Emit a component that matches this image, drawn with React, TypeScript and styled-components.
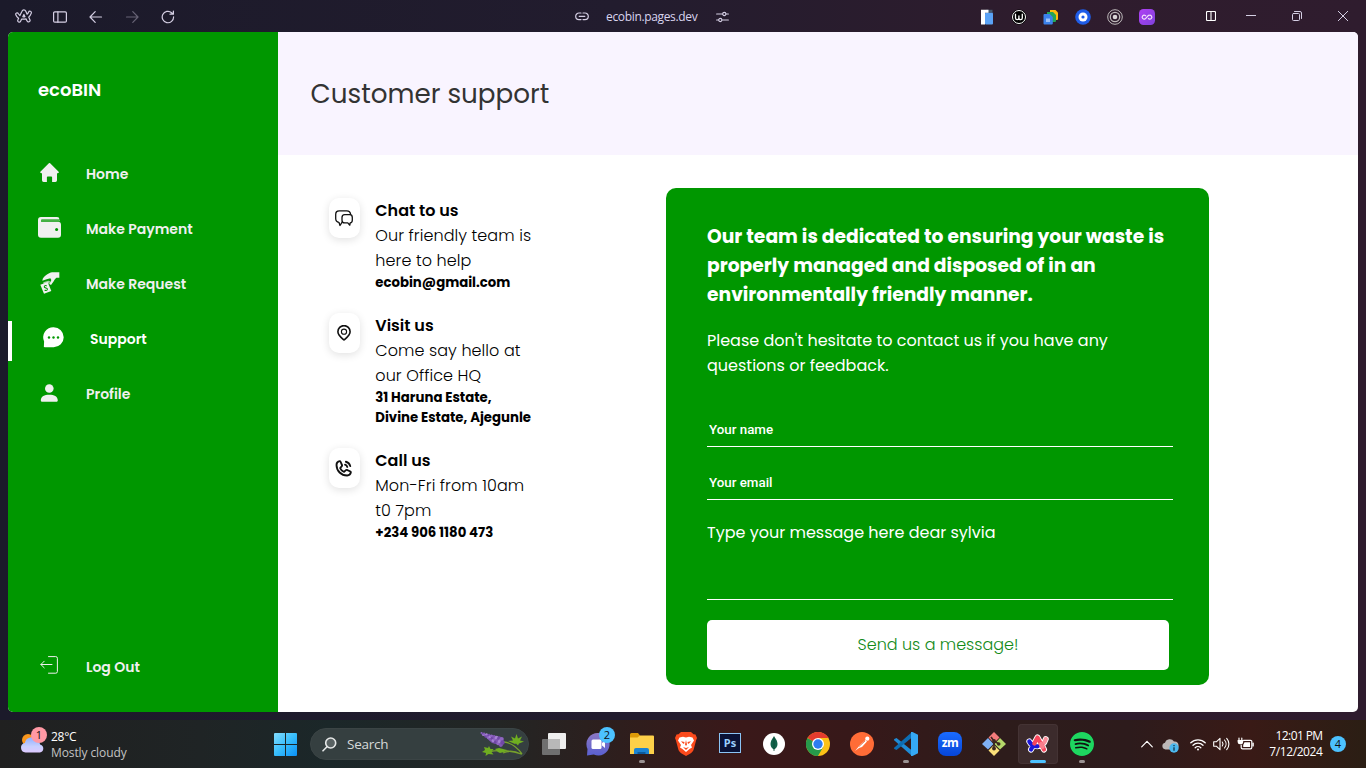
import React from "react";
import styled, { createGlobalStyle, css } from "styled-components";
import { PiPhoneCallBold } from "react-icons/pi";
import { SiSpotify } from "react-icons/si";

const GREEN = "#009700";

const GlobalStyle = createGlobalStyle`
  *, *::before, *::after { box-sizing: border-box; }
  body { margin: 0; overflow: hidden; }
  button, input, textarea { margin: 0; }
  svg { display: block; flex: none; }
`;

const spaced = css<{ $ls?: number }>`
  letter-spacing: ${({ $ls = 0 }) => $ls}px;
  white-space: nowrap;
`;

/* ---------- desktop and browser frame ---------- */

const Desktop = styled.div`
  width: 1366px;
  height: 768px;
  display: flex;
  flex-direction: column;
  background: linear-gradient(90deg, #1b1a2a 0%, #221c2e 45%, #2e1c2d 75%, #2f1c2e 100%);
  font-family: "Open Sans", "Noto Sans", sans-serif;
`;

const TitleBar = styled.header`
  height: 32px;
  flex: none;
  display: grid;
  grid-template-columns: 575px 1fr 387px;
  align-items: center;
  padding-top: 1px;
  color: #d5cfe4;
`;

const BrowserControls = styled.div`
  display: grid;
  grid-template-columns: repeat(5, 36px);
  justify-items: center;
  align-items: center;
  padding-left: 6px;
`;

const AddressBar = styled.div`
  display: flex;
  align-items: center;
  font-size: 12px;
  line-height: 16px;
`;

const Address = styled.span`
  ${spaced}
  width: 92px;
  margin: 0 18px 0 17px;
  color: #d9d4ee;
`;

const Extensions = styled.div`
  display: flex;
  align-items: center;
  gap: 16px;
`;

const WindowControls = styled.div`
  display: flex;
  align-items: center;
  gap: 36px;
  margin-left: 35px;
  padding-bottom: 1px;
`;

const SplitButton = styled.span`
  margin-right: -6px;
`;

const Page = styled.div`
  height: 680px;
  flex: none;
  margin: 0 8px 8px;
  display: flex;
  border-radius: 5px;
  overflow: hidden;
  background: #fff;
  font-family: Poppins, Inter, sans-serif;
`;

/* ---------- sidebar ---------- */

const Sidebar = styled.aside`
  width: 270px;
  flex: none;
  display: flex;
  flex-direction: column;
  background: ${GREEN};
  color: #f0f0f0;
`;

const Brand = styled.div`
  height: 27px;
  margin: 44px 0 53px 30px;
  font-size: 18px;
  font-weight: 600;
  line-height: 27px;
  color: #fff;
`;

const Nav = styled.nav`
  flex: 1;
  display: flex;
  flex-direction: column;
  gap: 15px;
`;

const NavItem = styled.a<{ $active?: boolean }>`
  height: 40px;
  display: flex;
  align-items: center;
  gap: 25px;
  padding: 0 0 4px 30px;
  font-size: 14px;
  font-weight: 600;
  white-space: nowrap;
  ${({ $active }) =>
    $active &&
    css`
      border-left: 4px solid #fff;
      color: #fff;
    `}
`;

const NavIcon = styled.span`
  width: 23px;
  display: flex;
  justify-content: center;
  padding-bottom: 3px;
`;

const LogOut = styled(NavItem)`
  margin-bottom: 23px;
  ${NavIcon} { padding-bottom: 5px; }
`;

/* ---------- main area ---------- */

const Main = styled.main`
  flex: 1;
  display: flex;
  flex-direction: column;
`;

const PageHeader = styled.div`
  height: 123px;
  flex: none;
  display: flex;
  align-items: center;
  padding-left: 32.5px;
  background: #f9f4ff;
`;

const Title = styled.h1`
  margin: 0;
  font-size: 26.2px;
  font-weight: 400;
  line-height: 40px;
  color: #333;
`;

const Content = styled.div`
  display: flex;
  align-items: flex-start;
  padding: 33px 0 0 51px;
`;

const Contacts = styled.div`
  width: 337px;
  display: flex;
  flex-direction: column;
  gap: 20px;
  padding-top: 10px;
`;

const Contact = styled.section`
  display: flex;
  align-items: flex-start;
  gap: 15px;
`;

const Tile = styled.div`
  width: 31px;
  height: 40px;
  display: flex;
  align-items: center;
  justify-content: center;
  padding-right: 1px;
  border-radius: 10px;
  background: #fff;
  box-shadow: 0 2px 8px rgba(0, 0, 0, 0.12);
`;

const ContactText = styled.div`
  display: flex;
  flex-direction: column;
  padding-left: 0.3px;
  color: #000;
  white-space: nowrap;
`;

const ContactTitle = styled.strong`
  font-size: 16px;
  font-weight: 600;
  line-height: 25px;
`;

const ContactLine = styled.span`
  font-size: 16px;
  font-weight: 300;
  line-height: 25px;
  letter-spacing: 0.08px;
`;

const ContactDetail = styled.span`
  font-size: 13.28px;
  font-weight: 700;
  line-height: 20px;
`;

/* ---------- message form ---------- */

const FormCard = styled.form`
  width: 543px;
  height: 497px;
  display: flex;
  flex-direction: column;
  padding: 34px 36px 15px 41px;
  border-radius: 10px;
  background: ${GREEN};
  color: #fff;
`;

const Lead = styled.h2`
  margin: 0 0 19px;
  font-size: 18.72px;
  font-weight: 700;
  line-height: 29px;
`;

const Intro = styled.p`
  width: 430px;
  margin: 0 0 34px;
  font-size: 16px;
  font-weight: 400;
  line-height: 25px;
`;

const Field = styled.input`
  width: 466px;
  height: 35px;
  margin-bottom: 18px;
  padding: 1px 2px;
  border: 0;
  border-bottom: 1px solid #fff;
  outline: 0;
  background: transparent;
  color: #fff;
  font: 500 13.33px Roboto, sans-serif;
  &::placeholder { color: #fff; opacity: 1; }
`;

const Message = styled.textarea`
  width: 466px;
  height: 80px;
  margin: 2px 0 20px;
  padding: 0;
  border: 0;
  border-bottom: 1px solid #fff;
  outline: 0;
  resize: none;
  background: transparent;
  color: #fff;
  font: 400 16px/25px Poppins, Inter, sans-serif;
  &::placeholder { color: #fff; opacity: 1; }
`;

const SendButton = styled.button`
  width: 462px;
  height: 50px;
  padding: 0 0 2px;
  border: 0;
  border-radius: 5px;
  background: #fff;
  color: #128a18;
  font: 300 16px/25px Poppins, Inter, sans-serif;
`;

/* ---------- taskbar ---------- */

const Taskbar = styled.footer`
  height: 48px;
  flex: none;
  display: flex;
  align-items: center;
  background: linear-gradient(
    90deg,
    #202020 0,
    #1f2425 200px,
    #1b2729 330px,
    #232524 500px,
    #2e1e1d 620px,
    #3a1819 740px,
    #371819 850px,
    #2d1c1b 1000px,
    #2d1b1c 1130px,
    #391a16 1250px,
    #2b1e14 1366px
  );
  color: #fff;
`;

const Weather = styled.div`
  width: 274px;
  display: flex;
  align-items: center;
  gap: 4px;
  padding-left: 20px;
`;

const WeatherText = styled.div`
  display: flex;
  flex-direction: column;
  padding-top: 2px;
  font-size: 12px;
  line-height: 16px;
`;

const SmallText = styled.span<{ $ls?: number; $muted?: boolean }>`
  ${spaced}
  color: ${({ $muted }) => ($muted ? "#c3c3c3" : "#fff")};
`;

const SearchBox = styled.div`
  width: 219px;
  height: 32px;
  display: flex;
  align-items: center;
  margin: 0 3px 0 13px;
  padding: 0 3px 0 11px;
  border-radius: 16px;
  background: #353f40;
  border: 1px solid #3b4445;
`;

const SearchLabel = styled.span<{ $ls?: number }>`
  ${spaced}
  flex: 1;
  margin-left: 10px;
  font-size: 13.5px;
  color: #d5d9d9;
`;

const Apps = styled.div`
  display: flex;
`;

const AppSlot = styled.div<{ $active?: boolean; $running?: boolean }>`
  position: relative;
  width: 40px;
  height: 40px;
  margin: 0 2px;
  display: flex;
  align-items: center;
  justify-content: center;
  border-radius: 4px;
  ${({ $active }) =>
    $active && "background: #3c2b2c; box-shadow: inset 0 0 0 1px #443334;"}
  ${({ $active, $running }) =>
    ($active || $running) &&
    css`
      &::after {
        content: "";
        position: absolute;
        bottom: 1px;
        width: ${$active ? 16 : 6}px;
        height: 3px;
        border-radius: 2px;
        background: ${$active ? "#4cc2ff" : "#9a9292"};
      }
    `}
`;

const Count = styled.span<{ $pink?: boolean }>`
  position: absolute;
  top: ${({ $pink }) => ($pink ? "-4px" : "3px")};
  right: ${({ $pink }) => ($pink ? "0" : "3px")};
  width: 16px;
  height: 16px;
  border-radius: 50%;
  background: ${({ $pink }) => ($pink ? "#ff99a4" : "#4cc2ff")};
  color: #111;
  font-size: 11px;
  line-height: 16px;
  text-align: center;
`;

const WeatherIcon = styled.span`
  position: relative;
  width: 27px;
`;

const PsTile = styled.span`
  width: 22px;
  height: 20px;
  margin-bottom: 3px;
  border: 1px solid #8bc4f5;
  background: #0a1236;
  color: #9bd0ff;
  font-size: 11px;
  font-weight: 700;
  line-height: 17px;
  text-align: center;
`;

const ZoomTile = styled.span`
  width: 24px;
  height: 24px;
  border-radius: 8px;
  background: linear-gradient(#1a6cff, #0645d8);
  color: #fff;
  font: 700 12px/21px "Open Sans", sans-serif;
  letter-spacing: -0.5px;
  text-align: center;
`;

const SpotifyMark = styled.span`
  width: 24px;
  height: 24px;
  border-radius: 50%;
  background: #111;
  color: #1ed760;
`;

const Tray = styled.div`
  flex: 1;
  display: flex;
  align-items: center;
  justify-content: flex-end;
  padding-right: 20px;
`;

const TrayIcons = styled.div`
  display: flex;
  align-items: center;
  gap: 7px;
  margin-right: 13.5px;
`;

const CloudStatus = styled.span`
  margin: 2px 4px 0 2.5px;
`;

const Clock = styled.div`
  width: 55px;
  display: flex;
  flex-direction: column;
  align-items: flex-end;
  margin-right: 7.5px;
  font-size: 12px;
  line-height: 16px;
`;

const NotificationCount = styled.span`
  width: 16px;
  height: 16px;
  border-radius: 50%;
  background: #4cc2ff;
  color: #111;
  font-size: 11px;
  line-height: 16px;
  text-align: center;
`;

/* ---------- drawings ---------- */

const stroke = {
  fill: "none",
  stroke: "currentColor",
  strokeLinecap: "round" as const,
  strokeLinejoin: "round" as const,
};

const HomeIcon = () => (
  <svg width="19" height="20" viewBox="0 0 19 20" fill="currentColor">
    <path d="M8.600.4a1.300 1.300 0 0 1 1.800 0l8 8c.9.9.4 1.900-.7 1.900H17v7a1.600 1.600 0 0 1-1.600 1.600h-3.300v-4.600a.9.9 0 0 0-.9-.9H7.800a.9.9 0 0 0-.9.9v4.600H3.600A1.600 1.600 0 0 1 2 17.300v-7h-.7c-1.100 0-1.600-1-.7-1.900Z" />
  </svg>
);

const WalletIcon = () => (
  <svg width="23" height="21" viewBox="0 0 23 21" fill="currentColor">
    <path d="M3 0H19a2.400 2.400 0 0 1 2.400 2.600H3.500v.5H21.500V4H3.500A2 2 0 0 0 3 4.700H20a3 3 0 0 1 3 3V17.800a3 3 0 0 1-3 3H3a3 3 0 0 1-3-3V3a3 3 0 0 1 3-3Z" />
    <path d="M3 2.800H21.500V4.700H3Z" fill="#45b245" />
    <circle cx="18.600" cy="12.500" r="1.500" fill={GREEN} />
  </svg>
);

/* A hand reaching in from the right, holding out a tilted banknote. */
const RequestIcon = () => (
  <svg width="20" height="22" viewBox="0 0 60 66" fill="currentColor">
    <path d="M58 1v16H49c-4 3-7 9-10 14l-6 8-5-3 6-12-3-5-11 3-13 4c0-8 8-15 15-19 8-5 13-6 19-6Z" />
    <path d="m10 31 15-5 5 2-2 9-5-5-12 4Z" opacity=".7" />
    <path d="m1 38 22-8 11 27-22 8Z" />
    <path d="M20 42c-3-3-8-1-7 3s8 2 9 6-4 6-8 3" fill="none" stroke={GREEN} strokeWidth="3.200" />
  </svg>
);

const SupportIcon = () => (
  <svg width="21" height="21" viewBox="0 0 21 21">
    <path d="M10.700.3a10 10 0 1 1 0 20H1.800c-.8 0-1.200-.6-.9-1.300l.2-4.500A10 10 0 0 1 10.700.3Z" fill="currentColor" />
    <g fill={GREEN}>
      <circle cx="6" cy="10.500" r="1.200" />
      <circle cx="10.500" cy="10.500" r="1.200" />
      <circle cx="15" cy="10.500" r="1.200" />
    </g>
  </svg>
);

const ProfileIcon = () => (
  <svg width="19" height="18" viewBox="0 0 19 18" fill="currentColor">
    <circle cx="9.300" cy="4.500" r="4.300" />
    <path d="M.8 16.200C1.100 12.400 4.300 10.700 9.300 10.700s8.200 1.700 8.500 5.500c0 .9-.5 1.500-1.300 1.500H2.100c-.8 0-1.300-.6-1.300-1.500Z" />
  </svg>
);

const LogOutIcon = () => (
  <svg width="19" height="18" viewBox="0 0 19 18" {...stroke}>
    <path d="M8.500.6h7.200a1.700 1.700 0 0 1 1.700 1.700v13.200a1.700 1.700 0 0 1-1.700 1.700H8.500M12 8.500H.9M4.200 5.200.9 8.500l3.300 3.300" />
  </svg>
);

const ChatIcon = () => (
  <svg width="18" height="17" viewBox="0 0 18 17" {...stroke} stroke="#111" strokeWidth="1.300">
    <path d="M7 12.300 5 15.500 3.900 12.300C1.600 12 .7 11 .7 8.500V4.500C.7 1.700 1.600.8 4.300.8h7.500c2.600 0 3.500.7 3.800 3.500" />
    <path d="M9.700 4.700h5c1.900 0 2.600.8 2.600 2.700v2.800c0 1.800-.6 2.500-2.100 2.600l-.4 2.400-2-2.300H9.700c-2 0-2.700-.8-2.700-2.700V7.400c0-1.900.8-2.700 2.700-2.700Z" />
  </svg>
);

const PinIcon = () => (
  <svg width="14" height="16" viewBox="0 0 14 16" {...stroke} stroke="#111">
    <path strokeWidth="1.600" d="M7 15C4.800 13 .9 10.300.9 6.700a6.100 6.100 0 0 1 12.200 0C13.100 10.300 9.200 13 7 15Z" />
    <circle cx="7" cy="6.700" r="2.600" strokeWidth="1.100" />
  </svg>
);

const ArcOutline = () => (
  <svg width="18" height="15" viewBox="0 0 18 15" {...stroke} strokeWidth="1.200">
    <path d="M7 2.300C7.700.5 10 .5 10.800 2.300l1.300 2.900c.8-.6 1.200-1.400 1.500-2.200.7-1.700 3.200-.7 2.700 1.100-.5 1.500-1.400 2.900-2.600 4l1.200 2.600c.8 1.900-1.800 3.200-2.800 1.300L11 9.900c-1.500.4-3 .4-4.300.1L5.600 12.200c-.9 1.800-3.500.7-2.700-1.300l.7-1.700C2.400 8.300 1.500 7.200.9 5.900.1 4.200 2.500 3 3.400 4.700c.4.7.9 1.300 1.500 1.800L7 2.300Z" />
    <path d="M8.900 5.500 7.800 7.700c.7.2 1.500.2 2.200 0L8.900 5.500Z" />
  </svg>
);

const SidebarGlyph = () => (
  <svg width="14" height="12" viewBox="0 0 14 12" {...stroke} strokeWidth="1.200">
    <rect x=".6" y=".8" width="12.800" height="10.400" rx="1.200" />
    <path d="M4.900.8v10.400" />
  </svg>
);

const Arrow = ({ forward }: { forward?: boolean }) => (
  <svg width="14" height="14" viewBox="0 0 14 14" {...stroke} strokeWidth="1.200" opacity={forward ? 0.4 : 1}>
    <path d={forward ? "M1.500 7h11.500M7.800 1.600 13 7l-5.200 5.400" : "M12.500 7H1M6.200 1.600 1 7l5.200 5.400"} />
  </svg>
);

const ReloadGlyph = () => (
  <svg width="14" height="14" viewBox="0 0 14 14" {...stroke} strokeWidth="1.200">
    <path d="M12.600 6.800A5.700 5.700 0 1 1 10.600 2.700L12 4M12.400 1v3.200H9" />
  </svg>
);

const LinkGlyph = () => (
  <svg width="14" height="9" viewBox="0 0 14 9" {...stroke} strokeWidth="1.200">
    <path d="M6 1H4a3.300 3.300 0 0 0 0 6.600h2M8 1h2a3.300 3.300 0 0 1 0 6.600H8M4.200 4.300h5.600" />
  </svg>
);

const TuneGlyph = () => (
  <svg width="13" height="12" viewBox="0 0 13 12" {...stroke} strokeWidth="1.100">
    <path d="M.6 3h6M10 3h2.400M.6 9h2M6 9h6.400" />
    <circle cx="8.300" cy="3" r="1.600" />
    <circle cx="4.300" cy="9" r="1.600" />
  </svg>
);

const PagesExtension = () => (
  <svg width="16" height="16" viewBox="0 0 16 16">
    <rect x="6" y="3.500" width="8" height="12" rx="1" fill="#5aa2f6" />
    <path d="M7 .8h6.500v2.700H7Z" fill="#465a70" />
    <path d="M2 .8h7.500v3H6V15.500H2Z" fill="#fff" />
  </svg>
);

const WExtension = () => (
  <svg width="16" height="16" viewBox="0 0 16 16" fill="none">
    <circle cx="8" cy="8" r="7.500" fill="#000" />
    <circle cx="8" cy="8" r="6.500" stroke="#fff" />
    <path d="M4.500 4.800V9a1.700 1.700 0 0 0 3.400 0V6.500V9a1.700 1.700 0 0 0 3.400 0V4.800" stroke="#fff" strokeWidth="1.300" />
  </svg>
);

const DocsExtension = () => (
  <svg width="16" height="16" viewBox="0 0 16 16">
    <path d="M7 1h5.500L15 3.500V10a1 1 0 0 1-1 1H7Z" fill="#fbb90d" />
    <path d="M4 3h6l3 3v6a1 1 0 0 1-1 1H4Z" fill="#23a455" />
    <path d="M1.500 5h5.300l3 3v6.500a1 1 0 0 1-1 1H1.500a1 1 0 0 1-1-1V6a1 1 0 0 1 1-1Z" fill="#3b82ec" />
    <path d="M3 9.500h4v3.500H3Z" fill="#9cc2fb" />
  </svg>
);

const RingExtension = () => (
  <svg width="16" height="16" viewBox="0 0 16 16">
    <circle cx="8" cy="8" r="7.800" fill="#1f5de8" />
    <circle cx="8" cy="8" r="4.500" fill="#fff" />
    <circle cx="8" cy="8" r="1.600" fill="#1f5de8" />
  </svg>
);

const TargetExtension = () => (
  <svg width="16" height="16" viewBox="0 0 16 16" fill="none" stroke="#bdb8ba">
    <circle cx="8" cy="8" r="7.300" />
    <circle cx="8" cy="8" r="4.700" strokeWidth="1.300" />
    <circle cx="8" cy="8" r="2.300" fill="#d8d4d6" stroke="none" />
  </svg>
);

const InfinityExtension = () => (
  <svg width="16" height="16" viewBox="0 0 16 16" fill="none">
    <defs>
      <linearGradient id="violet" x1="0" y1="0" x2="1" y2="1">
        <stop offset="0" stopColor="#b040f4" />
        <stop offset="1" stopColor="#7f42dc" />
      </linearGradient>
    </defs>
    <rect width="16" height="16" rx="4.500" fill="url(#violet)" />
    <path d="M9.800 6 6.300 9.800a2 2 0 1 1 0-3.300l.7.700M9 9.300l.7.500a2 2 0 1 0 0-3.300" stroke="#f3defc" strokeWidth="1.200" />
  </svg>
);

const SplitGlyph = () => (
  <svg width="10" height="10" viewBox="0 0 10 10" fill="none" stroke="#fff" strokeWidth="1.100">
    <rect x=".5" y=".5" width="9" height="9" rx="1" />
    <path d="M5 .5v9" />
  </svg>
);

const MinimizeGlyph = () => (
  <svg width="10" height="10" viewBox="0 0 10 10" stroke="currentColor">
    <path d="M0 4.500h10" />
  </svg>
);

const RestoreGlyph = () => (
  <svg width="10" height="10" viewBox="0 0 10 10" {...stroke}>
    <rect x=".5" y="2.500" width="7" height="7" rx="1" />
    <path d="M2.500.5H8A1.500 1.500 0 0 1 9.500 2v5.500" />
  </svg>
);

const CloseGlyph = () => (
  <svg width="10" height="10" viewBox="0 0 10 10" {...stroke}>
    <path d="m.3.300 9.400 9.400M9.700.3.300 9.700" />
  </svg>
);

const CloudDrawing = () => (
  <svg width="27" height="26" viewBox="0 0 27 26">
    <defs>
      <linearGradient id="cloud" x1="0" y1="0" x2="0" y2="1">
        <stop offset="0" stopColor="#8fb0ff" />
        <stop offset="0.600" stopColor="#c8d0ff" />
        <stop offset="1" stopColor="#ddc9ff" />
      </linearGradient>
    </defs>
    <circle cx="8" cy="9" r="6" fill="#f8971d" />
    <path d="M5.500 21.500a4.800 4.800 0 0 1-.6-9.500A6.500 6.500 0 0 1 17 9.700a5.600 5.600 0 0 1 3.400 4 4 4 0 0 1-.5 7.800Z" fill="url(#cloud)" />
  </svg>
);

const WindowsLogo = () => (
  <svg width="23" height="23" viewBox="0 0 23 23">
    <defs>
      <linearGradient id="win" x1="0" y1="0" x2="1" y2="1">
        <stop offset="0" stopColor="#83dcfd" />
        <stop offset="0.500" stopColor="#37bdfb" />
        <stop offset="1" stopColor="#0a90f6" />
      </linearGradient>
    </defs>
    <path d="M1 0h10v11H0V1a1 1 0 0 1 1-1ZM12 0h10a1 1 0 0 1 1 1v10H12ZM0 12h11v11H1a1 1 0 0 1-1-1ZM12 12h11v10a1 1 0 0 1-1 1H12Z" fill="url(#win)" />
  </svg>
);

const SearchGlyph = () => (
  <svg width="15" height="15" viewBox="0 0 15 15" fill="none" stroke="#e6e8e8" strokeWidth="1.600" strokeLinecap="round">
    <circle cx="8.700" cy="6" r="5" fill="#596263" />
    <path d="m5 9.800-4 4" />
  </svg>
);

const LAVENDER = Array.from({ length: 26 }, (_, i) => {
  const t = i / 25;
  const side = (i % 3) - 1;
  return { x: 2.5 + t * 21, y: 2.5 + t * 9 + side * (0.6 + t * 2.6), r: 1 + t * 1.2 };
});

const LavenderDrawing = () => (
  <svg width="46" height="26" viewBox="0 0 46 26">
    <path d="M25 11c8 1 13 5 18 12M9 21c12-3 22-1 34 2M24 22c6-3 12-2 18 1" fill="none" stroke="#77a12c" strokeWidth="1.300" />
    <path d="m2 2 18 4 5 4-2 4.500L13 12Z" fill="#7c55ad" />
    {LAVENDER.map((p, i) => (
      <circle key={i} cx={p.x} cy={p.y} r={p.r} fill={["#8f66c2", "#7048a6", "#a582d2", "#8257b6"][i % 4]} />
    ))}
    <path d="m36 13-7-3 5-.5-2-4 4 2L37.500 3 39 7.500l4-2-2 4 4 1-5 2-1 2-2-2ZM7 22l-4-1 3-2-1-3 4 1 1-2 1.500 3 3 0-2 3 2 2.500-5-.5-3 2ZM19 21l-3-3 4-1 4 1 4 1-3 2-4 1Z" fill="#6fae20" />
  </svg>
);

const TaskViewIcon = () => (
  <svg width="24" height="24" viewBox="0 0 24 24">
    <rect x="6" y="1" width="18" height="16" rx="1" fill="#eee" />
    <rect x="0" y="7" width="18" height="16" rx="1" fill="#6f6f6f" />
    <path d="M6 7h12v10H6Z" fill="#b8b8b8" />
  </svg>
);

const MeetIcon = () => (
  <svg width="24" height="24" viewBox="0 0 24 24">
    <defs>
      <linearGradient id="meet" x1="0" y1="0" x2="0" y2="1">
        <stop offset="0" stopColor="#8c78c4" />
        <stop offset="1" stopColor="#5a60d0" />
      </linearGradient>
    </defs>
    <path d="M12 1a11.200 11.200 0 1 1-4.200 21.400L1 23.500 1.500 17A11.200 11.200 0 0 1 12 1Z" fill="url(#meet)" />
    <rect x="5.500" y="7.500" width="10" height="9.500" rx="1.500" fill="#fff" />
    <path d="m16 11 3-2.500v7.500L16 13.500Z" fill="#fff" />
  </svg>
);

const FolderIcon = () => (
  <svg width="24" height="22" viewBox="0 0 24 22">
    <path d="M0 1.500A1.500 1.500 0 0 1 1.500 0H8l2 2.500V6H0Z" fill="#dc9a08" />
    <path d="M0 4.500h7.500L10 2.500h13a1 1 0 0 1 1 1V21H0Z" fill="#fdd049" />
    <path d="M4 21v-4a2 2 0 0 1 2-2h11a2 2 0 0 1 2 2v4Z" fill="#1b84d4" />
    <path d="M7.500 21v-2h8v2Z" fill="#0c5b9d" />
  </svg>
);

const BraveDrawing = () => (
  <svg width="22" height="24" viewBox="0 0 22 24">
    <path d="M6 0h10l2.500 2.300 2 .2L22 6l-.8 2L18.500 18c-.5 1.500-2 2.700-3.500 3.800L11 24l-4-2.200C5.500 20.700 4 19.500 3.500 18L.8 8 0 6l1.500-3.500 2-.2Z" fill="#fb4a1c" />
    <path d="M4.500 5.500 8 4.700l3 .8 3-.8 3.500.8 1.500 3-3 4.500 1 2.500-2.500 1.500-3.500 3-3.500-3L5 15.500 6 13 3 8.500Z" fill="#fff" />
    <path d="m6 9.300 3.500.8-.5 2L7.500 11ZM16 9.300l-3.500.8.500 2 1.500-1.100ZM11 8l1 4.500-1 1.500-1-1.500ZM8 15l3 1 3-1-3 3Z" fill="#fb4a1c" />
  </svg>
);

const MongoDrawing = () => (
  <svg width="22" height="22" viewBox="0 0 22 22">
    <circle cx="11" cy="11" r="11" fill="#fff" />
    <path d="M11 3.500c2.300 2.700 3.500 5 3.500 7.500S13.300 15.200 11 16.500C8.700 15.200 7.500 13.500 7.500 11S8.700 6.200 11 3.500Z" fill="#116149" />
    <path d="M11 3.500V18" stroke="#0a4a36" strokeWidth=".8" />
  </svg>
);

const ChromeDrawing = () => (
  <svg width="24" height="24" viewBox="0 0 24 24">
    <circle cx="12" cy="12" r="12" fill="#fbc116" />
    <path d="M12 12 1.600 6A12 12 0 0 0 12 24l5.200-9Z" fill="#269a4b" />
    <path d="M12 12 1.600 6a12 12 0 0 1 20.800 0H12Z" fill="#e33b2e" />
    <circle cx="12" cy="12" r="6" fill="#fff" />
    <circle cx="12" cy="12" r="4.700" fill="#2d7df0" />
  </svg>
);

const PostmanDrawing = () => (
  <svg width="24" height="24" viewBox="0 0 24 24" fill="none">
    <circle cx="12" cy="12" r="12" fill="#ff6c37" />
    <path d="m5 19 5-6 5.500-5 1.500 1.500-5 5.500-3 1-4 3Z" fill="#fff" />
    <circle cx="17.300" cy="6.700" r="2.100" fill="#fff" />
    <path d="m9 14.500 6-5.500" stroke="#e9825f" />
  </svg>
);

const CodeDrawing = () => (
  <svg width="24" height="24" viewBox="0 0 24 24">
    <path d="M2.500 6 18 18.500V24L.4 8.500c-.5-.5-.5-1 0-1.400Z" fill="#1f8bd6" />
    <path d="M2.500 18 18 5.500V0L.4 15.500c-.5.500-.5 1 0 1.400Z" fill="#0d6db3" />
    <path d="M17 0h1.500L24 2.700v18.600L18.500 24H17Z" fill="#35a9f5" />
  </svg>
);

const GitDrawing = () => (
  <svg width="24" height="24" viewBox="0 0 24 24">
    <path d="m12 0 5.500 5.500L12 11 6.500 5.500Z" fill="#f37c7c" />
    <path d="m6 6 5.500 6L6 17.500 0 12Z" fill="#7fb0f5" />
    <path d="m18 6 6 6-6 5.500-5.500-5.500Z" fill="#b5d86a" />
    <path d="m12 13 5.500 5.500L12 24l-5.500-5.500Z" fill="#fbe07a" />
    <path d="m9 5 3 4v8M12 9l5 3" stroke="#3b2620" strokeWidth="1.600" fill="none" />
    <circle cx="12" cy="9" r="1.900" fill="#3b2620" />
    <circle cx="12" cy="16.500" r="1.900" fill="#3b2620" />
    <circle cx="16.700" cy="12" r="1.800" fill="#3b2620" />
  </svg>
);

/* Back to front: white outline, the two arms, then the peaked shape. */
const ArcDrawing = () => (
  <svg width="24" height="22" viewBox="0 0 24 22" fill="none" strokeLinecap="round" strokeLinejoin="round">
    <path d="M3.300 8.500C5 12 8 13.300 11.500 13.300c4 0 7-3 8.300-7.300M5 16.500l6.500-12 6.500 12M8 13h7" stroke="#fff" strokeWidth="6" />
    <path d="M12 13c4 0 6.800-3.500 7.800-7" stroke="#fb8f9b" strokeWidth="4.200" />
    <path d="M3.300 8.500C5 12 8 13.300 11.500 13.300M5 16.500l3-5.500" stroke="#1b16d8" strokeWidth="4.200" />
    <path d="m8.300 10.500 3.200-6L18 16.500" stroke="#f8465c" strokeWidth="4.200" />
    <path d="m15 11 1.500 2.800" stroke="#fb7f8d" strokeWidth="4.200" />
  </svg>
);

const ChevronGlyph = () => (
  <svg width="12" height="8" viewBox="0 0 12 8" {...stroke} strokeWidth="1.200">
    <path d="m.7 6.800 5.300-5.500 5.300 5.500" />
  </svg>
);

const OneDriveGlyph = () => (
  <svg width="17" height="15" viewBox="0 0 17 15">
    <path d="M3.500 11.500A3.400 3.400 0 0 1 3 4.800 5 5 0 0 1 12 3.500a4 4 0 0 1 1 8Z" fill="#bcb7b7" />
    <circle cx="12" cy="10" r="4.700" fill="#4cb8ee" />
    <path d="M12 9.300v3.500M12 7v1.200" stroke="#15384c" strokeWidth="1.300" />
  </svg>
);

const WifiGlyph = () => (
  <svg width="16" height="13" viewBox="0 0 16 13" {...stroke} strokeWidth="1.300">
    <path d="M.8 4.800a10.200 10.200 0 0 1 14.400 0M3 7.300a7 7 0 0 1 10 0M5.200 9.700a4 4 0 0 1 5.600 0" />
    <circle cx="8" cy="11.500" r="1" fill="currentColor" stroke="none" />
  </svg>
);

const VolumeGlyph = () => (
  <svg width="17" height="14" viewBox="0 0 17 14" {...stroke} strokeWidth="1.100">
    <path d="M.7 4.800h2.600L7 1.300v11.400L3.300 9.200H.7ZM9.300 5a3.300 3.300 0 0 1 0 4M11.500 3a6 6 0 0 1 0 8M13.700 1.300a8.500 8.500 0 0 1 0 11.400" />
  </svg>
);

const BatteryGlyph = () => (
  <svg width="17" height="14" viewBox="0 0 17 14" {...stroke} strokeWidth="1.200">
    <path d="M6.500 3.300h7a1.300 1.300 0 0 1 1.300 1.300v6a1.300 1.300 0 0 1-1.300 1.300H5.500A1.300 1.300 0 0 1 4.200 10.600V8M16.200 6v3" />
    <path d="M7.500 5.300h5.500v4.600H6.200V8Z" fill="currentColor" stroke="none" />
    <path d="M.6 3h5.600v2a2.300 2.300 0 0 1-2.300 2.300H3A2.400 2.400 0 0 1 .6 5Z" fill="currentColor" stroke="none" />
    <path d="M2 1v2M4.800 1v2" />
  </svg>
);

/* ---------- data ---------- */

const NAV: { label: string; icon: React.ReactNode; active?: boolean }[] = [
  { label: "Home", icon: <HomeIcon /> },
  { label: "Make Payment", icon: <WalletIcon /> },
  { label: "Make Request", icon: <RequestIcon /> },
  { label: "Support", icon: <SupportIcon />, active: true },
  { label: "Profile", icon: <ProfileIcon /> },
];

const CONTACTS: { icon: React.ReactNode; title: string; lines: string[]; details: string[] }[] = [
  {
    icon: <ChatIcon />,
    title: "Chat to us",
    lines: ["Our friendly team is", "here to help"],
    details: ["ecobin@gmail.com"],
  },
  {
    icon: <PinIcon />,
    title: "Visit us",
    lines: ["Come say hello at", "our Office HQ"],
    details: ["31 Haruna Estate,", "Divine Estate, Ajegunle"],
  },
  {
    icon: <PiPhoneCallBold size={20} color="#111" />,
    title: "Call us",
    lines: ["Mon-Fri from 10am", "t0 7pm"],
    details: ["+234 906 1180 473"],
  },
];

const APPS: { name: string; icon: React.ReactNode; active?: boolean; running?: boolean }[] = [
  { name: "tasks", icon: <TaskViewIcon /> },
  { name: "meet", icon: <><MeetIcon /><Count>2</Count></> },
  { name: "files", icon: <FolderIcon />, running: true },
  { name: "brave", icon: <BraveDrawing /> },
  { name: "photoshop", icon: <PsTile>Ps</PsTile> },
  { name: "mongodb", icon: <MongoDrawing /> },
  { name: "chrome", icon: <ChromeDrawing /> },
  { name: "postman", icon: <PostmanDrawing /> },
  { name: "code", icon: <CodeDrawing />, running: true },
  { name: "zoom", icon: <ZoomTile>zm</ZoomTile> },
  { name: "git", icon: <GitDrawing /> },
  { name: "arc", icon: <ArcDrawing />, active: true },
  { name: "spotify", icon: <SpotifyMark><SiSpotify size={24} /></SpotifyMark>, running: true },
];

export default function App() {
  return (
    <Desktop>
      <GlobalStyle />
      <TitleBar>
        <BrowserControls>
          <ArcOutline />
          <SidebarGlyph />
          <Arrow />
          <Arrow forward />
          <ReloadGlyph />
        </BrowserControls>
        <AddressBar>
          <LinkGlyph />
          <Address $ls={-0.34}>ecobin.pages.dev</Address>
          <TuneGlyph />
        </AddressBar>
        <Extensions>
          <PagesExtension />
          <WExtension />
          <DocsExtension />
          <RingExtension />
          <TargetExtension />
          <InfinityExtension />
          <WindowControls>
            <SplitButton><SplitGlyph /></SplitButton>
            <MinimizeGlyph />
            <RestoreGlyph />
            <CloseGlyph />
          </WindowControls>
        </Extensions>
      </TitleBar>

      <Page>
        <Sidebar>
          <Brand>ecoBIN</Brand>
          <Nav>
            {NAV.map(({ label, icon, active }) => (
              <NavItem key={label} $active={active}>
                <NavIcon>{icon}</NavIcon>
                {label}
              </NavItem>
            ))}
          </Nav>
          <LogOut>
            <NavIcon><LogOutIcon /></NavIcon>
            Log Out
          </LogOut>
        </Sidebar>

        <Main>
          <PageHeader>
            <Title>Customer support</Title>
          </PageHeader>
          <Content>
            <Contacts>
              {CONTACTS.map(({ icon, title, lines, details }) => (
                <Contact key={title}>
                  <Tile>{icon}</Tile>
                  <ContactText>
                    <ContactTitle>{title}</ContactTitle>
                    {lines.map((t) => <ContactLine key={t}>{t}</ContactLine>)}
                    {details.map((t) => <ContactDetail key={t}>{t}</ContactDetail>)}
                  </ContactText>
                </Contact>
              ))}
            </Contacts>
            <FormCard>
              <Lead>
                Our team is dedicated to ensuring your waste is properly managed
                and disposed of in an environmentally friendly manner.
              </Lead>
              <Intro>
                Please don't hesitate to contact us if you have any questions or feedback.
              </Intro>
              <Field placeholder="Your name" />
              <Field placeholder="Your email" />
              <Message placeholder="Type your message here dear sylvia" />
              <SendButton type="button">Send us a message!</SendButton>
            </FormCard>
          </Content>
        </Main>
      </Page>

      <Taskbar>
        <Weather>
          <WeatherIcon><CloudDrawing /><Count $pink>1</Count></WeatherIcon>
          <WeatherText>
            <SmallText $ls={-0.25}>28°C</SmallText>
            <SmallText $ls={-0.1} $muted>Mostly cloudy</SmallText>
          </WeatherText>
        </Weather>
        <WindowsLogo />
        <SearchBox>
          <SearchGlyph />
          <SearchLabel $ls={-0.25}>Search</SearchLabel>
          <LavenderDrawing />
        </SearchBox>
        <Apps>
          {APPS.map(({ name, icon, active, running }) => (
            <AppSlot key={name} $active={active} $running={running}>{icon}</AppSlot>
          ))}
        </Apps>
        <Tray>
          <TrayIcons>
            <ChevronGlyph />
            <CloudStatus><OneDriveGlyph /></CloudStatus>
            <WifiGlyph />
            <VolumeGlyph />
            <BatteryGlyph />
          </TrayIcons>
          <Clock>
            <SmallText $ls={-0.6}>12:01 PM</SmallText>
            <SmallText $ls={-0.4}>7/12/2024</SmallText>
          </Clock>
          <NotificationCount>4</NotificationCount>
        </Tray>
      </Taskbar>
    </Desktop>
  );
}
